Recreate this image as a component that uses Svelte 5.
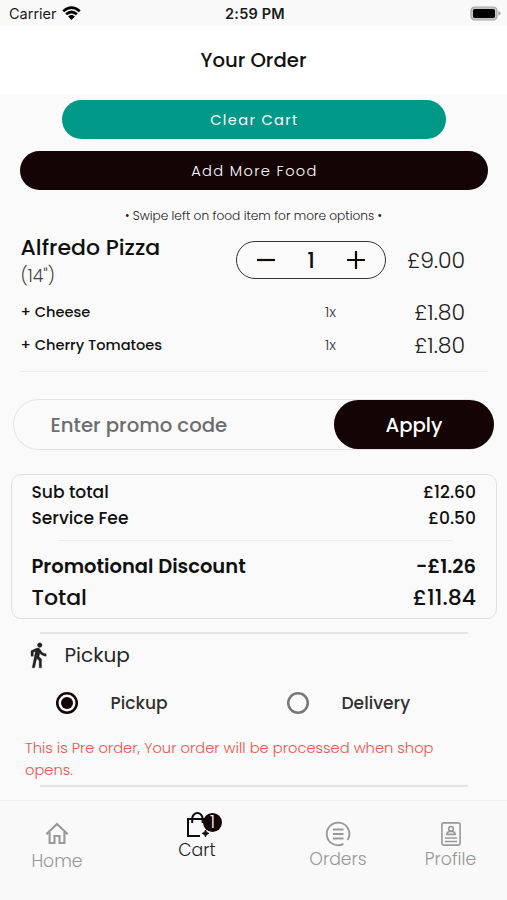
<script>
  const extras = [
    { name: '+ Cheese', price: '£1.80' },
    { name: '+ Cherry Tomatoes', price: '£1.80' }
  ];
</script>

<div class="screen">
  <div class="status">
    <div class="carrier">
      <span>Carrier</span>
      <svg width="19" height="15" viewBox="0 0 19 15" fill="none" stroke="#000" stroke-width="2.7">
        <path d="M1.2 5.2Q9.5-2 17.8 5.2M4.1 8.3Q9.5 3.7 14.9 8.3" />
        <path d="M6.1 10.5Q9.5 7.7 12.9 10.5L9.5 14Z" fill="#000" stroke="none" />
      </svg>
    </div>
    <b>2:59 PM</b>
    <div class="battery">
      <svg width="31" height="15" viewBox="0 0 31 15">
        <rect x="1" y="1" width="26" height="13" rx="3.6" fill="#c4c4c4" stroke="#a8a8a8" stroke-width="1.2" />
        <rect x="3" y="3" width="22" height="9" rx="1.8" fill="#000" />
        <path d="M28.3 5v4.7Q30.7 8.8 30.7 7.3T28.3 5Z" fill="#aaa" />
      </svg>
    </div>
  </div>

  <header><h1>Your Order</h1></header>

  <main>
    <button class="clear">Clear Cart</button>
    <button class="more">Add More Food</button>
    <p class="hint">• Swipe left on food item for more options •</p>

    <section class="item">
      <div class="dish">
        <div class="title">
          <h2>Alfredo Pizza</h2>
          <div class="size">(14")</div>
        </div>
        <div class="stepper">
          <svg width="20" height="20" viewBox="0 0 20 20" stroke="#150909" stroke-width="2.2"><path d="M1 10h18" /></svg>
          <span>1</span>
          <svg width="20" height="20" viewBox="0 0 20 20" stroke="#150909" stroke-width="2.2"><path d="M1 10h18M10 1v18" /></svg>
        </div>
        <div class="price">£9.00</div>
      </div>
      {#each extras as extra}
        <div class="extra">
          <div class="name">{extra.name}</div>
          <div class="count">1x</div>
          <div class="price">{extra.price}</div>
        </div>
      {/each}
    </section>

    <div class="promo">
      <div class="field">Enter promo code</div>
      <button class="apply">Apply</button>
    </div>

    <section class="summary">
      <div class="line"><span>Sub total</span><span>£12.60</span></div>
      <div class="line"><span>Service Fee</span><span>£0.50</span></div>
      <hr />
      <div class="line discount"><span>Promotional Discount</span><span>-£1.26</span></div>
      <div class="line total"><span>Total</span><span>£11.84</span></div>
    </section>

    <section class="method">
      <div class="heading">
        <svg width="28" height="28" viewBox="0 0 24 24" fill="#242424" stroke="#242424" stroke-width=".3">
          <path d="M13.5 5.5c1.1 0 2-.9 2-2s-.9-2-2-2-2 .9-2 2 .9 2 2 2zM9.8 8.900L7 23h2.100l1.800-8 2.100 2v6h2v-7.500l-2.100-2 .6-3C14.800 12 16.800 13 19 13v-2c-1.900 0-3.500-1-4.300-2.400l-1-1.600c-.4-.6-1-1-1.700-1-.3 0-.5.1-.8.1L6 8.300V13h2V9.600l1.800-.7" />
        </svg>
        <span>Pickup</span>
      </div>
      <div class="choices">
        <div class="choice"><i class="radio on"></i><span>Pickup</span></div>
        <div class="choice"><i class="radio"></i><span>Delivery</span></div>
      </div>
      <p class="notice">This is Pre order, Your order will be processed when shop opens.</p>
    </section>
  </main>

  <nav>
    <div class="tab home">
      <svg width="26" height="24" viewBox="0 0 26 24" fill="none" stroke="#999" stroke-width="2.1">
        <path d="M2.300 13.300L13 3l10.700 10.300M5.600 11v11h4.900v-7h5v7h4.900V11" />
      </svg>
      <span>Home</span>
    </div>
    <div class="tab cart">
      <div class="bag">
        <svg width="26" height="28" viewBox="0 0 26 28" fill="none" stroke="#0d0d0d" stroke-width="2">
          <path d="M16 26H4V9h17V17M8.200 13V8.500a5.200 5.400 0 0 1 10.400 0V13" />
          <path d="M21.500 20l1 2.400 2.400 1-2.400 1-1 2.400-1-2.400-2.400-1 2.400-1Z" fill="#0d0d0d" stroke-width="1" />
        </svg>
        <div class="badge">1</div>
      </div>
      <span>Cart</span>
    </div>
    <div class="tab orders">
      <svg width="26" height="26" viewBox="0 0 26 26" fill="none" stroke="#999" stroke-width="1.9">
        <path d="M18.400 22.900A11.300 11.300 0 1 1 22.600 19" />
        <path d="M8 8.500h10.500M8 13h10.500M8 17.500h10.500" />
      </svg>
      <span>Orders</span>
    </div>
    <div class="tab profile">
      <svg width="22" height="26" viewBox="0 0 22 26" fill="none" stroke="#999" stroke-width="1.6">
        <rect x="1.900" y="1.900" width="18.200" height="22.200" rx="2" />
        <circle cx="11" cy="7.800" r="2.300" />
        <path d="M6.800 13.400q.3-2.500 2.900-3h2.600q2.600.5 2.900 3ZM4.800 17h12.400M4.800 20.500h12.400" />
      </svg>
      <span>Profile</span>
    </div>
  </nav>
</div>

<style>
  :global(body) {
    margin: 0;
  }
  .screen {
    width: 507px;
    height: 900px;
    overflow: hidden;
    display: flex;
    flex-direction: column;
    background: #fafafa;
    color: #111;
    font-family: Poppins, Inter, 'Liberation Sans', sans-serif;
    white-space: nowrap;
  }
  .screen * {
    box-sizing: border-box;
  }
  h1,
  h2,
  p {
    margin: 0;
    font-weight: 500;
  }
  svg {
    flex: none;
    display: block;
  }
  button {
    display: flex;
    align-items: center;
    justify-content: center;
    border: 0;
    padding: 0;
    color: #fff;
    font: inherit;
  }

  .status {
    height: 26px;
    flex: none;
    display: grid;
    grid-template-columns: 1fr auto 1fr;
    align-items: center;
    padding: 1px 6px 0 9px;
    background: #f9f9f9;
    font-family: Inter, sans-serif;
    font-size: 14.5px;
    color: #1b1b1b;
  }
  .status b {
    font-weight: 600;
    letter-spacing: 0.2px;
  }
  .carrier {
    display: flex;
    align-items: center;
    gap: 5px;
  }
  .battery {
    display: flex;
    justify-content: flex-end;
  }
  header {
    height: 68px;
    flex: none;
    display: flex;
    align-items: center;
    justify-content: center;
    background: #fff;
  }
  h1 {
    font-size: 19.7px;
  }
  main {
    height: 706px;
    flex: none;
    display: flex;
    flex-direction: column;
    padding-top: 6px;
  }
  .clear,
  .more {
    height: 39px;
    flex: none;
    padding: 1px 0 0 1px;
    border-radius: 20px;
    font-size: 14.6px;
    letter-spacing: 1.35px;
  }
  .clear {
    margin: 0 61px 0 62px;
    background: #009987;
  }
  .more {
    margin: 12px 19px 0 20px;
    background: #140405;
    font-weight: 300;
  }
  .hint {
    height: 22px;
    margin-top: 15px;
    display: flex;
    align-items: center;
    justify-content: center;
    font-size: 12.2px;
    font-weight: 300;
    color: #222;
  }
  .item {
    height: 145px;
    margin: 0 19px 0 20px;
    border-bottom: 1px solid #ececec;
  }
  .dish {
    height: 69px;
    display: flex;
    align-items: center;
  }
  .title {
    width: 216px;
    padding-left: 0.5px;
  }
  h2 {
    height: 28px;
    line-height: 28px;
    font-size: 22px;
  }
  .size {
    height: 28px;
    line-height: 28px;
    font-size: 17.2px;
    font-weight: 300;
    color: #444;
  }
  .stepper {
    width: 150px;
    height: 38px;
    margin-bottom: 3px;
    padding: 0 19px;
    display: flex;
    align-items: center;
    justify-content: space-between;
    border: 1.5px solid #333;
    border-radius: 19px;
    font-size: 22px;
    font-weight: 500;
  }
  .price {
    flex: 1;
    padding-right: 23px;
    text-align: right;
    font-size: 22px;
    font-weight: 300;
    color: #222;
  }
  .dish .price {
    padding-bottom: 2px;
  }
  .extra {
    height: 33px;
    display: flex;
    align-items: center;
    font-size: 14.6px;
  }
  .name {
    width: 305px;
    padding-left: 0.5px;
    font-weight: 500;
  }
  .count {
    width: 30px;
    font-weight: 300;
    color: #333;
  }
  .promo {
    height: 51px;
    flex: none;
    display: flex;
    align-items: center;
    justify-content: space-between;
    margin: 27px 13px 0;
    border: 1px solid #e3e3e3;
    border-right: 0;
    border-radius: 26px;
    font-size: 19.7px;
    font-weight: 500;
  }
  .field {
    padding: 1px 0 0 36.5px;
    color: #6d6d6d;
  }
  .apply {
    width: 160px;
    height: 49px;
    padding-top: 1px;
    border-radius: 25px;
    background: #140405;
  }
  .summary {
    height: 145px;
    flex: none;
    margin: 24px 10px 0 11px;
    padding: 4px 20px 0 19.5px;
    border: 1px solid #e0e0e0;
    border-radius: 10px;
    font-size: 17.1px;
    font-weight: 500;
  }
  .line {
    height: 26px;
    display: flex;
    align-items: center;
    justify-content: space-between;
  }
  .summary hr {
    height: 1px;
    margin: 9px 23px 9px 26px;
    border: 0;
    background: #ebebeb;
  }
  .discount {
    height: 32px;
    font-size: 19.5px;
    font-weight: 600;
  }
  .total {
    height: 30px;
    font-size: 22px;
  }
  .method {
    height: 155px;
    flex: none;
    margin-top: 13px;
  }
  .method::before,
  .method::after {
    content: '';
    display: block;
    height: 2px;
    margin: 0 39px 0 40px;
    background: #e4e4e4;
  }
  .heading {
    height: 43px;
    padding: 0 0 2px 23.5px;
    display: flex;
    align-items: center;
    gap: 13px;
    font-size: 20px;
    color: #242424;
  }
  .choices {
    height: 52px;
    padding-left: 56px;
    display: flex;
    align-items: center;
    font-size: 17.1px;
    font-weight: 500;
    color: #303030;
  }
  .choice {
    width: 231px;
    flex: none;
    display: flex;
    align-items: center;
    gap: 32.5px;
  }
  .radio {
    width: 22px;
    height: 22px;
    box-shadow: inset 0 0 0 2.5px #777;
    border-radius: 50%;
    display: grid;
    place-items: center;
  }
  .radio.on {
    box-shadow: inset 0 0 0 2.5px #140405;
  }
  .radio.on::after {
    content: '';
    width: 12px;
    height: 12px;
    border-radius: 50%;
    background: #140405;
  }
  .notice {
    height: 56px;
    padding: 8px 50px 0 25px;
    white-space: normal;
    font-size: 14.7px;
    font-weight: 300;
    line-height: 22px;
    color: #f0524a;
  }
  nav {
    height: 100px;
    flex: none;
    display: flex;
    border-top: 1px solid #f0f0f0;
    background: #f9f9f9;
    font-size: 17.3px;
    font-weight: 300;
    line-height: 20px;
    color: #979797;
  }
  .tab {
    display: flex;
    flex-direction: column;
    align-items: center;
  }
  .home {
    width: 114px;
    padding-top: 20px;
    gap: 6px;
  }
  .cart {
    width: 166px;
    padding-top: 9px;
    gap: 2px;
    color: #222;
  }
  .orders {
    width: 116px;
    padding-top: 20px;
    gap: 2px;
  }
  .profile {
    width: 109px;
    padding-top: 20px;
    gap: 2px;
  }
  .bag {
    position: relative;
  }
  .badge {
    position: absolute;
    left: 19px;
    top: 3px;
    width: 19px;
    height: 19px;
    border-radius: 50%;
    background: #140405;
    color: #fff;
    font-size: 17px;
    line-height: 19px;
    text-align: center;
  }
</style>
